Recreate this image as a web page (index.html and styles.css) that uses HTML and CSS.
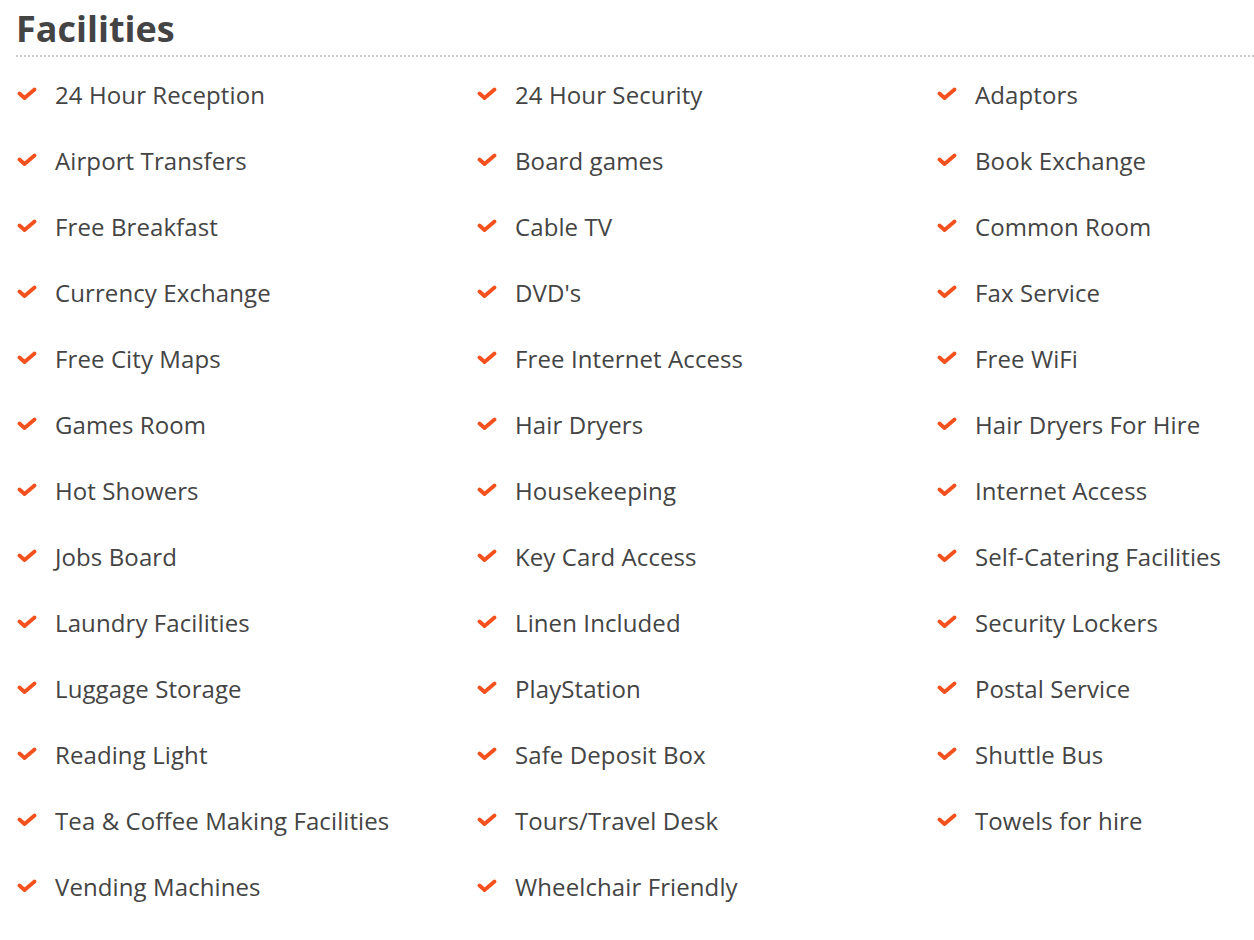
FILE: index.html
```html
<!DOCTYPE html>
<html>
<head>
<meta charset="utf-8">
<link rel="stylesheet" href="styles.css">
</head>
<body>
<section class="facilities">
  <h2 class="title">Facilities</h2>
  <ul class="grid">
    <li><svg class="tick" viewBox="0 0 20 14"><path d="M2.5 6.5 L7.5 11 L17.5 2.5"/></svg>24 Hour Reception</li>
    <li><svg class="tick" viewBox="0 0 20 14"><path d="M2.5 6.5 L7.5 11 L17.5 2.5"/></svg>24 Hour Security</li>
    <li><svg class="tick" viewBox="0 0 20 14"><path d="M2.5 6.5 L7.5 11 L17.5 2.5"/></svg>Adaptors</li>
    <li><svg class="tick" viewBox="0 0 20 14"><path d="M2.5 6.5 L7.5 11 L17.5 2.5"/></svg>Airport Transfers</li>
    <li><svg class="tick" viewBox="0 0 20 14"><path d="M2.5 6.5 L7.5 11 L17.5 2.5"/></svg>Board games</li>
    <li><svg class="tick" viewBox="0 0 20 14"><path d="M2.5 6.5 L7.5 11 L17.5 2.5"/></svg>Book Exchange</li>
    <li><svg class="tick" viewBox="0 0 20 14"><path d="M2.5 6.5 L7.5 11 L17.5 2.5"/></svg>Free Breakfast</li>
    <li><svg class="tick" viewBox="0 0 20 14"><path d="M2.5 6.5 L7.5 11 L17.5 2.5"/></svg>Cable TV</li>
    <li><svg class="tick" viewBox="0 0 20 14"><path d="M2.5 6.5 L7.5 11 L17.5 2.5"/></svg>Common Room</li>
    <li><svg class="tick" viewBox="0 0 20 14"><path d="M2.5 6.5 L7.5 11 L17.5 2.5"/></svg>Currency Exchange</li>
    <li><svg class="tick" viewBox="0 0 20 14"><path d="M2.5 6.5 L7.5 11 L17.5 2.5"/></svg>DVD's</li>
    <li><svg class="tick" viewBox="0 0 20 14"><path d="M2.5 6.5 L7.5 11 L17.5 2.5"/></svg>Fax Service</li>
    <li><svg class="tick" viewBox="0 0 20 14"><path d="M2.5 6.5 L7.5 11 L17.5 2.5"/></svg>Free City Maps</li>
    <li><svg class="tick" viewBox="0 0 20 14"><path d="M2.5 6.5 L7.5 11 L17.5 2.5"/></svg>Free Internet Access</li>
    <li><svg class="tick" viewBox="0 0 20 14"><path d="M2.5 6.5 L7.5 11 L17.5 2.5"/></svg>Free WiFi</li>
    <li><svg class="tick" viewBox="0 0 20 14"><path d="M2.5 6.5 L7.5 11 L17.5 2.5"/></svg>Games Room</li>
    <li><svg class="tick" viewBox="0 0 20 14"><path d="M2.5 6.5 L7.5 11 L17.5 2.5"/></svg>Hair Dryers</li>
    <li><svg class="tick" viewBox="0 0 20 14"><path d="M2.5 6.5 L7.5 11 L17.5 2.5"/></svg>Hair Dryers For Hire</li>
    <li><svg class="tick" viewBox="0 0 20 14"><path d="M2.5 6.5 L7.5 11 L17.5 2.5"/></svg>Hot Showers</li>
    <li><svg class="tick" viewBox="0 0 20 14"><path d="M2.5 6.5 L7.5 11 L17.5 2.5"/></svg>Housekeeping</li>
    <li><svg class="tick" viewBox="0 0 20 14"><path d="M2.5 6.5 L7.5 11 L17.5 2.5"/></svg>Internet Access</li>
    <li><svg class="tick" viewBox="0 0 20 14"><path d="M2.5 6.5 L7.5 11 L17.5 2.5"/></svg>Jobs Board</li>
    <li><svg class="tick" viewBox="0 0 20 14"><path d="M2.5 6.5 L7.5 11 L17.5 2.5"/></svg>Key Card Access</li>
    <li><svg class="tick" viewBox="0 0 20 14"><path d="M2.5 6.5 L7.5 11 L17.5 2.5"/></svg>Self-Catering Facilities</li>
    <li><svg class="tick" viewBox="0 0 20 14"><path d="M2.5 6.5 L7.5 11 L17.5 2.5"/></svg>Laundry Facilities</li>
    <li><svg class="tick" viewBox="0 0 20 14"><path d="M2.5 6.5 L7.5 11 L17.5 2.5"/></svg>Linen Included</li>
    <li><svg class="tick" viewBox="0 0 20 14"><path d="M2.5 6.5 L7.5 11 L17.5 2.5"/></svg>Security Lockers</li>
    <li><svg class="tick" viewBox="0 0 20 14"><path d="M2.5 6.5 L7.5 11 L17.5 2.5"/></svg>Luggage Storage</li>
    <li><svg class="tick" viewBox="0 0 20 14"><path d="M2.5 6.5 L7.5 11 L17.5 2.5"/></svg>PlayStation</li>
    <li><svg class="tick" viewBox="0 0 20 14"><path d="M2.5 6.5 L7.5 11 L17.5 2.5"/></svg>Postal Service</li>
    <li><svg class="tick" viewBox="0 0 20 14"><path d="M2.5 6.5 L7.5 11 L17.5 2.5"/></svg>Reading Light</li>
    <li><svg class="tick" viewBox="0 0 20 14"><path d="M2.5 6.5 L7.5 11 L17.5 2.5"/></svg>Safe Deposit Box</li>
    <li><svg class="tick" viewBox="0 0 20 14"><path d="M2.5 6.5 L7.5 11 L17.5 2.5"/></svg>Shuttle Bus</li>
    <li><svg class="tick" viewBox="0 0 20 14"><path d="M2.5 6.5 L7.5 11 L17.5 2.5"/></svg>Tea &amp; Coffee Making Facilities</li>
    <li><svg class="tick" viewBox="0 0 20 14"><path d="M2.5 6.5 L7.5 11 L17.5 2.5"/></svg>Tours/Travel Desk</li>
    <li><svg class="tick" viewBox="0 0 20 14"><path d="M2.5 6.5 L7.5 11 L17.5 2.5"/></svg>Towels for hire</li>
    <li><svg class="tick" viewBox="0 0 20 14"><path d="M2.5 6.5 L7.5 11 L17.5 2.5"/></svg>Vending Machines</li>
    <li><svg class="tick" viewBox="0 0 20 14"><path d="M2.5 6.5 L7.5 11 L17.5 2.5"/></svg>Wheelchair Friendly</li>
  </ul>
</section>
</body>
</html>
```

FILE: styles.css
```css
html, body {
  margin: 0;
  padding: 0;
  background: #fff;
}
body {
  font-family: "Open Sans", "Liberation Sans", sans-serif;
  color: #444;
}
.facilities {
  padding: 0 0 0 16px;
}
.title {
  margin: 0;
  padding-top: 7px;
  font-size: 36px;
  line-height: 44px;
  font-weight: 700;
  color: #444;
  padding-bottom: 4px;
  border-bottom: 2px dotted #ccc;
}
.grid {
  list-style: none;
  margin: 0;
  padding: 13px 0 0 0;
  display: grid;
  grid-template-columns: 460px 460px 1fr;
  grid-auto-rows: 66px;
}
.grid li {
  display: flex;
  align-items: center;
  height: 48px;
  font-size: 24px;
  letter-spacing: 0.1px;
  color: #444;
}
.tick {
  width: 20px;
  height: 14px;
  margin-left: 1px;
  margin-right: 18px;
  flex: none;
}
.tick path {
  fill: none;
  stroke: #f4511e;
  stroke-width: 3.8;
  stroke-linecap: round;
  stroke-linejoin: round;
}
```
